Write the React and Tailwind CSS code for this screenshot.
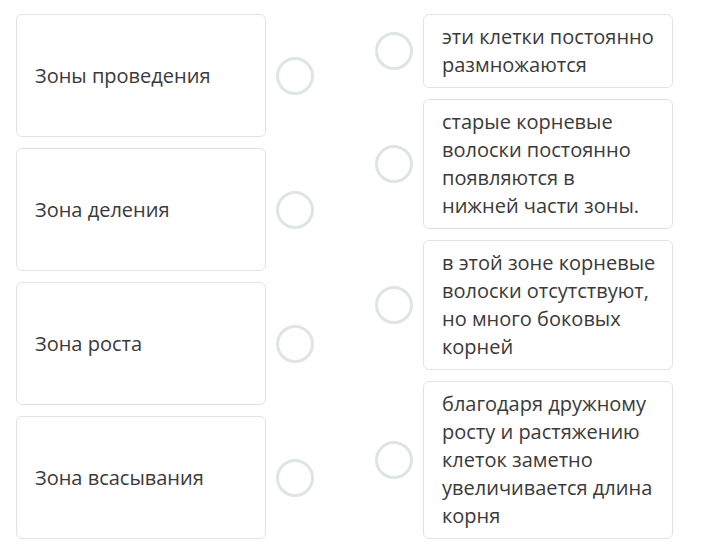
const LEFT = ["Зоны проведения", "Зона деления", "Зона роста", "Зона всасывания"];

const RIGHT = [
  "эти клетки постоянно размножаются",
  "старые корневые волоски постоянно появляются в нижней части зоны.",
  "в этой зоне корневые волоски отсутствуют, но много боковых корней",
  "благодаря дружному росту и растяжению клеток заметно увеличивается длина корня",
];

function Circle() {
  return (
    <div className="w-[38px] h-[38px] shrink-0 rounded-full border-[3px] border-[#dfe4e4] bg-white" />
  );
}

export default function App() {
  return (
    <div
      className="w-[704px] h-[554px] bg-white flex pt-[14px] pl-[16px] text-[#3a3a3a]"
      style={{ fontFamily: '"Open Sans", "Noto Sans", sans-serif' }}
    >
      {/* Left column: terms */}
      <div className="flex flex-col gap-[11px]">
        {LEFT.map((t) => (
          <div key={t} className="flex items-center gap-[10px]">
            <div className="w-[250px] h-[123px] flex items-center px-[18px] border border-[#e2e2e2] rounded-[6px] text-[20px] leading-[28px]">
              {t}
            </div>
            <Circle />
          </div>
        ))}
      </div>

      {/* Right column: definitions */}
      <div className="flex flex-col gap-[11px] ml-[61px]">
        {RIGHT.map((t) => (
          <div key={t} className="flex items-center gap-[10px]">
            <Circle />
            <div className="w-[250px] py-[8px] pl-[18px] pr-[16.5px] border border-[#e2e2e2] rounded-[6px] text-[20px] leading-[28px]">
              {t}
            </div>
          </div>
        ))}
      </div>
    </div>
  );
}
